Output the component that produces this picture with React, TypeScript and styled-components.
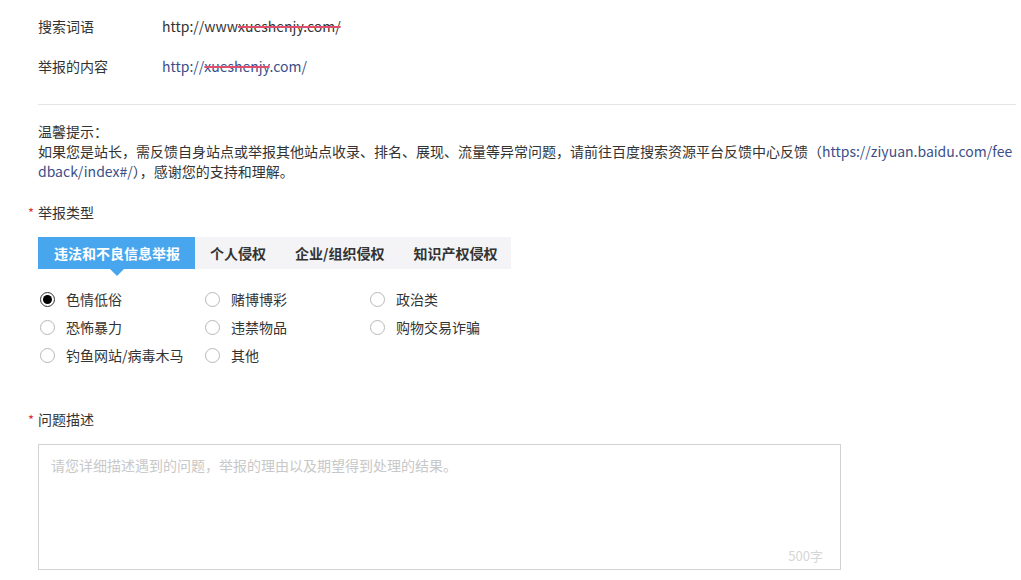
import { createGlobalStyle } from 'styled-components';
import styled from 'styled-components';

const GlobalStyle = createGlobalStyle`
  html, body {
    margin: 0;
    padding: 0;
    background: #fff;
  }
  body {
    font-family: "Noto Sans CJK SC", "Noto Sans", sans-serif;
    font-size: 14px;
    color: #333;
  }
`;

const Page = styled.div`
  width: 978px;
  padding: 6px 0 0 38px;
`;

const InfoRow = styled.div`
  display: flex;
  align-items: center;
  height: 40px;
`;

const InfoLabel = styled.div`
  width: 124px;
  color: #333;
`;

const InfoValue = styled.div<{ $link?: boolean }>`
  color: ${(p) => (p.$link ? '#3c4f88' : '#333')};
`;

const Struck = styled.span`
  text-decoration: line-through;
  text-decoration-color: #e0506e;
  text-decoration-thickness: 2px;
`;

const Divider = styled.div`
  height: 1px;
  background: #e6e6e6;
  margin: 18px 0 16px;
`;

const Tip = styled.div`
  line-height: 20px;
  word-break: break-all;
  color: #333;
`;

const TipLink = styled.span`
  color: #3c4f88;
`;

const FieldLabel = styled.div<{ $top: number }>`
  position: relative;
  line-height: 20px;
  margin-top: ${(p) => p.$top}px;
  &::before {
    content: '*';
    position: absolute;
    left: -10px;
    top: 1px;
    color: #d33;
    font-size: 13px;
  }
`;

const TabBar = styled.div`
  display: inline-flex;
  height: 32px;
  margin-top: 15px;
  background: #f4f4f6;
`;

const TabWrap = styled.div`
  display: flex;
`;

const Tab = styled.div<{ $active?: boolean }>`
  position: relative;
  flex-shrink: 0;
  white-space: nowrap;
  padding: ${(p) => (p.$active ? '0 15px 0 16px' : '0 14px 0 15px')};
  line-height: 32px;
  font-weight: bold;
  color: ${(p) => (p.$active ? '#fff' : '#333')};
  background: ${(p) => (p.$active ? '#48a6ee' : 'transparent')};
  &::after {
    content: '';
    display: ${(p) => (p.$active ? 'block' : 'none')};
    position: absolute;
    left: 50%;
    bottom: -7px;
    margin-left: -7px;
    border-left: 7px solid transparent;
    border-right: 7px solid transparent;
    border-top: 7px solid #48a6ee;
  }
`;

const RadioGrid = styled.div`
  display: grid;
  grid-template-columns: 165px 165px 165px;
  grid-auto-rows: 28px;
  margin: 16px 0 0 2px;
`;

const RadioItem = styled.label`
  display: flex;
  align-items: center;
  gap: 11px;
  color: #333;
`;

const RadioCircle = styled.span<{ $checked?: boolean }>`
  width: 15px;
  height: 15px;
  box-sizing: border-box;
  border-radius: 50%;
  border: 1px solid ${(p) => (p.$checked ? '#333' : '#b8b8b8')};
  display: flex;
  align-items: center;
  justify-content: center;
  &::after {
    content: '';
    width: 9px;
    height: 9px;
    border-radius: 50%;
    background: #000;
    display: ${(p) => (p.$checked ? 'block' : 'none')};
  }
`;

const TextBox = styled.div`
  position: relative;
  box-sizing: border-box;
  width: 803px;
  height: 126px;
  margin-top: 15px;
  border: 1px solid #d2d2d2;
  padding: 10px 12px;
  color: #c8c8c8;
`;

const Counter = styled.span`
  position: absolute;
  right: 17px;
  bottom: 4px;
  font-size: 13px;
  color: #d6d6d6;
`;

const radios = [
  { text: '色情低俗', checked: true },
  { text: '赌博博彩' },
  { text: '政治类' },
  { text: '恐怖暴力' },
  { text: '违禁物品' },
  { text: '购物交易诈骗' },
  { text: '钓鱼网站/病毒木马' },
  { text: '其他' },
];

const tabs = ['违法和不良信息举报', '个人侵权', '企业/组织侵权', '知识产权侵权'];

export default function App() {
  return (
    <>
      <GlobalStyle />
      <Page>
        <InfoRow>
          <InfoLabel>搜索词语</InfoLabel>
          <InfoValue>
            http://www<Struck>xueshenjy.com/</Struck>
          </InfoValue>
        </InfoRow>
        <InfoRow>
          <InfoLabel>举报的内容</InfoLabel>
          <InfoValue $link>
            http://<Struck>xueshenjy</Struck>.com/
          </InfoValue>
        </InfoRow>
        <Divider />
        <Tip>
          温馨提示：
          <br />
          如果您是站长，需反馈自身站点或举报其他站点收录、排名、展现、流量等异常问题，请前往百度搜索资源平台反馈中心反馈（
          <TipLink>https://ziyuan.baidu.com/feedback/index#/</TipLink>），感谢您的支持和理解。
        </Tip>
        <FieldLabel $top={21}>举报类型</FieldLabel>
        <TabWrap>
          <TabBar>
            {tabs.map((t, i) => (
              <Tab key={t} $active={i === 0}>
                {t}
              </Tab>
            ))}
          </TabBar>
        </TabWrap>
        <RadioGrid>
          {radios.map((r) => (
            <RadioItem key={r.text}>
              <RadioCircle $checked={r.checked} />
              {r.text}
            </RadioItem>
          ))}
        </RadioGrid>
        <FieldLabel $top={40}>问题描述</FieldLabel>
        <TextBox>
          请您详细描述遇到的问题，举报的理由以及期望得到处理的结果。
          <Counter>500字</Counter>
        </TextBox>
      </Page>
    </>
  );
}
